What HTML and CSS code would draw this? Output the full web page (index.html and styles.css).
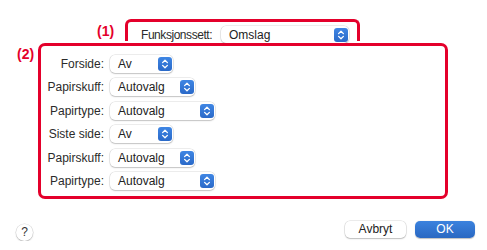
FILE: index.html
```html
<!DOCTYPE html>
<html lang="no">
<head>
  <meta charset="UTF-8" />
  <title>Omslag</title>
  <link rel="stylesheet" href="styles.css">
</head>
<body>

  <!-- (1) funksjonssett -->
  <div class="row-top">
    <div class="tag tag-1">(1)</div>
    <div class="box box-1">
      <span class="label">Funksjonssett:</span>
      <div class="popup w-set">
        <span>Omslag</span>
        <span class="arrows"><svg width="14" height="14" viewBox="0 0 14 14"><path d="M4.6 5.6 7 3.2 9.4 5.6M4.6 8.4 7 10.8 9.4 8.4" /></svg></span>
      </div>
    </div>
  </div>

  <!-- (2) innstillinger -->
  <div class="row-main">
    <div class="tag tag-2">(2)</div>
    <div class="box box-2">
      <div class="grid">
        <span class="label">Forside:</span>
        <div class="popup w-av"><span>Av</span><span class="arrows"><svg width="14" height="14" viewBox="0 0 14 14"><path d="M4.6 5.6 7 3.2 9.4 5.6M4.6 8.4 7 10.8 9.4 8.4" /></svg></span></div>

        <span class="label">Papirskuff:</span>
        <div class="popup w-skuff"><span>Autovalg</span><span class="arrows"><svg width="14" height="14" viewBox="0 0 14 14"><path d="M4.6 5.6 7 3.2 9.4 5.6M4.6 8.4 7 10.8 9.4 8.4" /></svg></span></div>

        <span class="label">Papirtype:</span>
        <div class="popup w-type"><span>Autovalg</span><span class="arrows"><svg width="14" height="14" viewBox="0 0 14 14"><path d="M4.6 5.6 7 3.2 9.4 5.6M4.6 8.4 7 10.8 9.4 8.4" /></svg></span></div>

        <span class="label">Siste side:</span>
        <div class="popup w-av"><span>Av</span><span class="arrows"><svg width="14" height="14" viewBox="0 0 14 14"><path d="M4.6 5.6 7 3.2 9.4 5.6M4.6 8.4 7 10.8 9.4 8.4" /></svg></span></div>

        <span class="label">Papirskuff:</span>
        <div class="popup w-skuff"><span>Autovalg</span><span class="arrows"><svg width="14" height="14" viewBox="0 0 14 14"><path d="M4.6 5.6 7 3.2 9.4 5.6M4.6 8.4 7 10.8 9.4 8.4" /></svg></span></div>

        <span class="label">Papirtype:</span>
        <div class="popup w-type"><span>Autovalg</span><span class="arrows"><svg width="14" height="14" viewBox="0 0 14 14"><path d="M4.6 5.6 7 3.2 9.4 5.6M4.6 8.4 7 10.8 9.4 8.4" /></svg></span></div>
      </div>
    </div>
  </div>

  <!-- knapper -->
  <div class="footer">
    <div class="help">?</div>
    <div class="spacer"></div>
    <div class="btn">Avbryt</div>
    <div class="btn btn-ok">OK</div>
  </div>

</body>
</html>
```

FILE: styles.css
```css
body {
  margin: 0; background: #fff; color: #2b2b2b;
  font-family: 'Liberation Sans', Arial, sans-serif; font-size: 12px;
}
.tag { color: #e4002b; font-weight: bold; font-size: 14px; line-height: 14px; }
.box { box-sizing: border-box; border: 3px solid #e4002b; }

.row-top { display: flex; padding: 19px 0 0 97px; }
.tag-1 { margin-top: 5px; width: 18px; margin-right: 10px; }
.box-1 {
  display: flex; align-items: flex-start; width: 235px; height: 22px;
  padding: 4px 0 0 13px; border-bottom: none; border-radius: 6px 6px 0 0;
}
.box-1 .label { margin-top: 2px; width: 80px; letter-spacing: -0.45px; }
.popup.w-set { width: 128px; height: 17px; }

.row-main { display: flex; padding: 2px 0 0 17px; }
.tag-2 { margin-top: 4px; width: 18px; margin-right: 3px; }
.box-2 { width: 410px; height: 156px; border-radius: 7px; }

.grid {
  display: grid; grid-template-columns: 63px auto; column-gap: 6px;
  grid-auto-rows: 23.5px; align-items: center; justify-items: start;
  padding-top: 6px;
}
.grid .label { justify-self: end; }

.popup {
  box-sizing: border-box; display: flex; align-items: center; justify-content: space-between;
  height: 18px; padding: 0 1px 0 8px; background: #fff;
  border-radius: 5px; box-shadow: 0 0 0 0.5px rgba(0,0,0,0.14), 0 1px 1.5px rgba(0,0,0,0.18);
  color: #222;
}
.w-av { width: 63px; }
.w-skuff { width: 85px; }
.w-type { width: 105px; }

.arrows {
  display: block; width: 14px; height: 14px; border-radius: 3px;
  background: linear-gradient(#3f86e4, #2a69c8);
}
.arrows svg { display: block; }
.arrows path { fill: none; stroke: #fff; stroke-width: 1.3; stroke-linecap: round; stroke-linejoin: round; }

.footer { display: flex; align-items: flex-start; padding: 22px 12px 0 16px; }
.help {
  box-sizing: border-box; width: 17px; height: 17px; margin-top: 3px; border-radius: 50%;
  background: #fff; box-shadow: 0 0 0 0.5px rgba(0,0,0,0.15), 0 1px 1.5px rgba(0,0,0,0.2);
  text-align: center; line-height: 17px; font-size: 12px; color: #333;
}
.spacer { flex: 1; }
.btn {
  width: 61px; height: 17px; line-height: 17px; text-align: center; border-radius: 5px;
  background: #fff; box-shadow: 0 0 0 0.5px rgba(0,0,0,0.15), 0 1px 1.5px rgba(0,0,0,0.2);
  color: #222;
}
.btn-ok {
  width: 60px; margin-left: 9px; color: #fff;
  background: linear-gradient(#3b82de, #2a68c2); box-shadow: 0 0.5px 1px rgba(0,0,0,0.25);
}
```
